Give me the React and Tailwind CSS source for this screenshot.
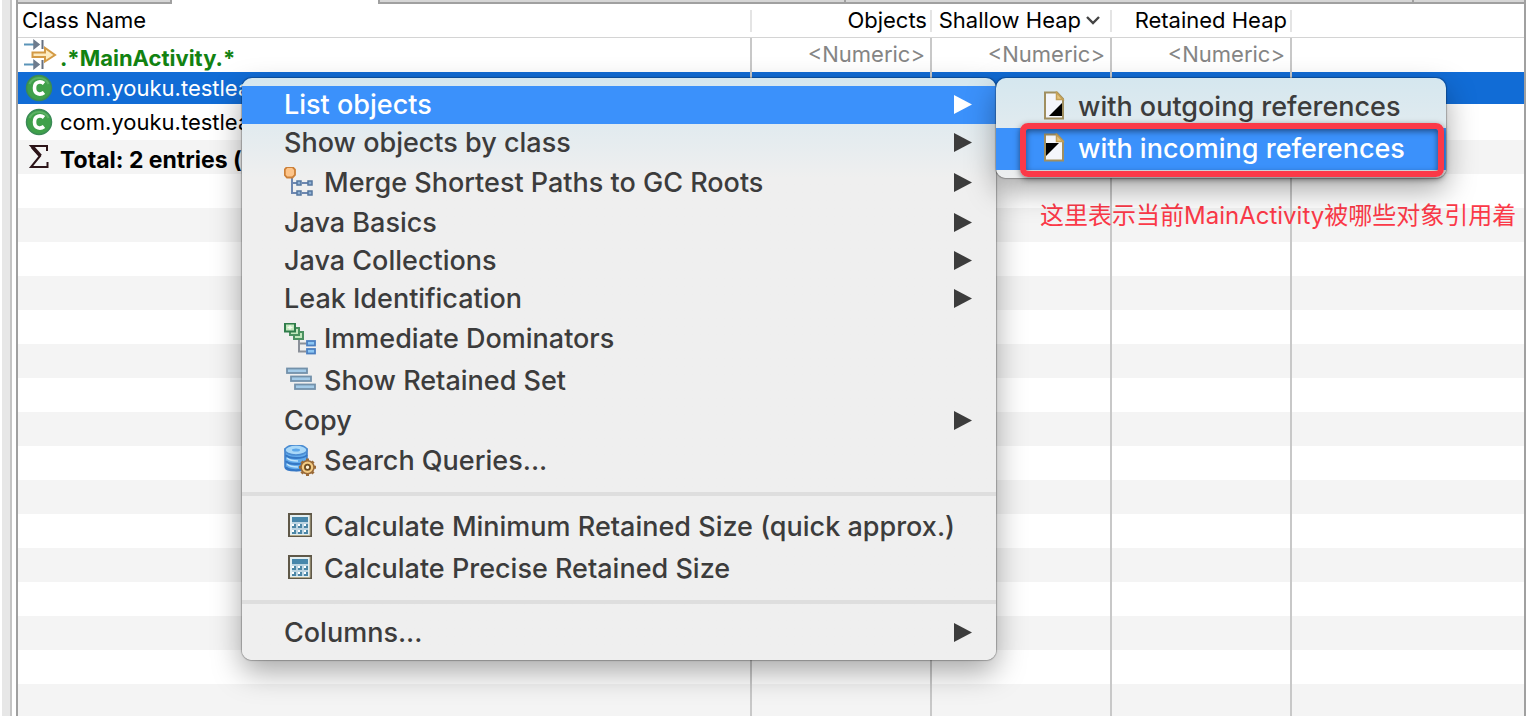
const stripes = Array.from({ length: 16 }, (_, i) => i);

function FilterIcon() {
  return (
    <svg width="34" height="34" viewBox="0 0 34 34" className="shrink-0" aria-hidden="true">
      <g fill="none" strokeWidth="2">
        <path d="M1 6.500H12" stroke="#5a94b8" />
        <path d="M1 26.500H12" stroke="#5a94b8" />
        <path d="M11 2.500L16 6.500L11 10.500Z M11 22.500L16 26.500L11 30.500Z" fill="#6f7c8d" stroke="#6f7c8d" strokeWidth="1.500" />
        <path d="M19.500 2V11 M19.500 22V31" stroke="#667080" />
      </g>
      <path d="M9.500 14.500H22V10L32 17L22 23.500V19H9.500Z" fill="#fdebc0" stroke="#d39a45" strokeWidth="2" />
    </svg>
  );
}

function ClassIcon() {
  return (
    <svg width="28" height="28" viewBox="0 0 28 28" className="shrink-0" aria-hidden="true">
      <circle cx="14" cy="14" r="12.500" fill="#3fa04a" stroke="#3b8a56" strokeWidth="1.500" />
      <path d="M4.500 10A10.500 10.500 0 0 1 23.500 10" fill="none" stroke="#5cb164" strokeWidth="2" />
      <path d="M19 9.500C16 7 9.500 7 9.500 14S16 21 19 18.500" fill="none" stroke="#fff" strokeWidth="3.600" />
    </svg>
  );
}

function SigmaIcon() {
  return (
    <svg width="28" height="28" viewBox="0 0 28 28" className="shrink-0" aria-hidden="true">
      <path d="M22 8V3H6L15 13L6 24H22.500V19" fill="none" stroke="#2c1418" strokeWidth="2" />
      <path d="M7.500 4L15.500 13" stroke="#2c1418" strokeWidth="3.500" />
    </svg>
  );
}

function MergeIcon() {
  return (
    <svg width="32" height="32" viewBox="0 0 32 32" aria-hidden="true">
      <path d="M8 10V26H14M8 16H14M18 16H24M18 26H24" fill="none" stroke="#6d87b0" strokeWidth="2" />
      <g fill="#8fb0d4" stroke="#56779f" strokeWidth="1.500">
        <rect x="13" y="14" width="4" height="4" />
        <rect x="24" y="14" width="4" height="4" />
        <rect x="13" y="24" width="4" height="4" />
        <rect x="24" y="24" width="4" height="4" />
      </g>
      <path d="M3 -1H8.500L11 1.500V7L8.500 9.500H3L0.800 7V1.500Z" transform="translate(0 1)" fill="#fdc489" stroke="#cc8038" strokeWidth="1.800" />
    </svg>
  );
}

function DominatorsIcon() {
  return (
    <svg width="32" height="32" viewBox="0 0 32 32" aria-hidden="true">
      <g fill="#c3e8bd" stroke="#4b9160" strokeWidth="2">
        <rect x="10" y="9" width="9" height="7" />
        <rect x="6" y="5" width="9" height="7" />
        <rect x="1" y="0.500" width="10" height="8" stroke="#2f7d4b" />
      </g>
      <path d="M3.500 4.500H8.500M6 2.500V6.500" stroke="#f3fcee" strokeWidth="1.500" />
      <path d="M15 17V28.500H22M15 20.500H22" fill="none" stroke="#8a9099" strokeWidth="2" />
      <g fill="#8cc6f4" stroke="#4c7fc0" strokeWidth="1.800">
        <rect x="23" y="18" width="8" height="4.500" />
        <rect x="23" y="26" width="8" height="4.500" />
      </g>
    </svg>
  );
}

function RetainedIcon() {
  return (
    <svg width="32" height="32" viewBox="0 0 32 32" aria-hidden="true">
      <g fill="#a4cbe8" stroke="#7391aa" strokeWidth="1.800">
        <rect x="3" y="3.500" width="20" height="4.500" />
        <rect x="7" y="11.500" width="20" height="4.500" />
        <rect x="11" y="19.500" width="20" height="4.500" />
      </g>
    </svg>
  );
}

function SearchIcon() {
  return (
    <svg width="32" height="32" viewBox="0 0 32 32" aria-hidden="true">
      <path d="M1 4V22C1 27 23 27 23 22V4Z" fill="#62abeb" stroke="#3a7bc8" strokeWidth="1.500" />
      <path d="M2 10C4 14 20 14 23 10M2 16C4 20 20 20 23 16M2 22C4 26 18 26 20 23" fill="none" stroke="#3577c4" strokeWidth="2" />
      <path d="M3 13C6 16 12 16 14 16M3 19C6 22 12 22 14 22" fill="none" stroke="#bfe3fb" strokeWidth="1.500" />
      <ellipse cx="12" cy="5" rx="11" ry="5" fill="#a9d8f8" stroke="#4a8cd2" strokeWidth="1.500" />
      <ellipse cx="12" cy="5" rx="4" ry="1.500" fill="#5ea8ea" />
      <path d="M23.500 13.500V31M15 22.300H32M17.500 16.500L29.500 28.500M29.500 16.500L17.500 28.500" stroke="#9a6a38" strokeWidth="3" />
      <circle cx="23.500" cy="22.300" r="6.500" fill="#f3cb83" stroke="#9a6a38" strokeWidth="1.500" />
      <circle cx="23.500" cy="22.300" r="2.600" fill="#fff3d6" stroke="#6e4c22" strokeWidth="1.800" />
    </svg>
  );
}

function CalculatorIcon() {
  return (
    <svg width="32" height="32" viewBox="0 0 32 32" aria-hidden="true">
      <rect x="5" y="3" width="22" height="22" fill="#e3eff2" stroke="#5f5848" strokeWidth="2" />
      <path d="M6 24.500H26V4" fill="none" stroke="#b3a988" strokeWidth="1" />
      <rect x="8" y="6" width="16" height="17" fill="#bcd5e2" />
      <rect x="8" y="6" width="16" height="5" fill="#4787ab" />
      <g fill="#4c87a6">
        <rect x="8" y="13" width="4" height="4" />
        <rect x="14" y="13" width="4" height="4" />
        <rect x="20" y="13" width="4" height="4" />
        <rect x="8" y="19" width="4" height="4" />
        <rect x="14" y="19" width="4" height="4" />
        <rect x="20" y="19" width="4" height="4" />
      </g>
      <g fill="#fff">
        <rect x="8" y="13" width="2" height="2" />
        <rect x="14" y="13" width="2" height="2" />
        <rect x="20" y="13" width="2" height="2" />
        <rect x="8" y="19" width="2" height="2" />
        <rect x="14" y="19" width="2" height="2" />
        <rect x="20" y="19" width="2" height="2" />
      </g>
    </svg>
  );
}

function PageIcon({ corner }) {
  return (
    <svg width="32" height="32" viewBox="0 0 32 32" aria-hidden="true">
      <path d="M7 1.500H19L25 8V27.500H7Z" fill="#f4f6fb" stroke="#a08f60" strokeWidth="2" />
      <path d="M18.500 1.500V8.500H25Z" fill="#e5c37c" stroke="#c3a057" strokeWidth="1.500" />
      <path d={corner === "out" ? "M24 12V25H11Z" : "M8 10H21L8 23Z"} fill="#000" />
    </svg>
  );
}

function Arrow() {
  return (
    <svg width="18" height="20" viewBox="0 0 18 20" className="ml-auto shrink-0" aria-hidden="true">
      <path d="M0 0L18 9.500L0 19Z" fill="currentColor" />
    </svg>
  );
}

function MenuItem({ label, icon, submenu, active }) {
  const height = icon ? "h-[42px]" : "h-[38px]";
  const tone = active ? "bg-[#3b91fb] text-white" : "text-[#3c3c3c]";
  return (
    <button
      type="button"
      role="menuitem"
      className={`flex w-full items-center gap-2 pr-6 pl-[42px] text-left whitespace-nowrap ${height} ${tone}`}
    >
      {icon}
      <span>{label}</span>
      {submenu && <Arrow />}
    </button>
  );
}

function Separator() {
  return (
    <div role="separator" className="py-[10px]">
      <div className="h-1 bg-[#dedede]" />
    </div>
  );
}

const panel =
  "rounded-[10px] bg-linear-to-b from-[#d5e7ef] to-[#efefef] py-2 shadow-[0_0_1px_1px_rgba(0,0,0,0.25),0_12px_30px_rgba(0,0,0,0.35)]";

function ContextMenu() {
  return (
    <div className="absolute top-[78px] left-[242px] flex items-start text-[27px] leading-8 font-[450]">
      <div role="menu" aria-label="Object actions" className={`w-[754px] to-[100px] ${panel}`}>
        <MenuItem label="List objects" submenu active />
        <MenuItem label="Show objects by class" submenu />
        <MenuItem label="Merge Shortest Paths to GC Roots" icon={<MergeIcon />} submenu />
        <MenuItem label="Java Basics" submenu />
        <MenuItem label="Java Collections" submenu />
        <MenuItem label="Leak Identification" submenu />
        <MenuItem label="Immediate Dominators" icon={<DominatorsIcon />} />
        <MenuItem label="Show Retained Set" icon={<RetainedIcon />} />
        <MenuItem label="Copy" submenu />
        <MenuItem label="Search Queries..." icon={<SearchIcon />} />
        <Separator />
        <MenuItem label="Calculate Minimum Retained Size (quick approx.)" icon={<CalculatorIcon />} />
        <MenuItem label="Calculate Precise Retained Size" icon={<CalculatorIcon />} />
        <Separator />
        <MenuItem label="Columns..." submenu />
      </div>
      <div>
        <div role="menu" aria-label="List objects" className={`relative w-[450px] to-[110px] ${panel}`}>
          <MenuItem label="with outgoing references" icon={<PageIcon corner="out" />} />
          <MenuItem label="with incoming references" icon={<PageIcon corner="in" />} active />
          <div className="pointer-events-none absolute top-[45px] right-[2px] left-6 h-[54px] rounded-lg border-6 border-[#fb3948] shadow-[0_2px_6px_rgba(0,0,0,0.5),inset_0_2px_6px_rgba(0,0,0,0.5)]" />
        </div>
        <p className="pt-[22px] pl-11 text-[24px] font-normal whitespace-nowrap text-[#fb3948]">
          这里表示当前MainActivity被哪些对象引用着
        </p>
      </div>
    </div>
  );
}

function NumericFilter({ label }) {
  return (
    <td className="border-r-2 border-[#c8c8c8] p-0 pr-[5px] pb-[2px]">
      <input
        aria-label={label}
        placeholder="<Numeric>"
        className="block w-full bg-transparent text-right outline-none placeholder:text-[#858585]"
      />
    </td>
  );
}

function EmptyCells() {
  return (
    <>
      <td className="border-r-2 border-[#c8c8c8]" />
      <td className="border-r-2 border-[#c8c8c8]" />
      <td className="border-r-2 border-[#c8c8c8]" />
      <td />
    </>
  );
}

function NameCell({ icon, children }) {
  return (
    <td className="overflow-hidden border-r-2 border-[#c8c8c8] p-0 whitespace-nowrap">
      <div className="flex items-center gap-[7px] pl-[7px]">
        {icon}
        {children}
      </div>
    </td>
  );
}

function HeaderCell({ children }) {
  return (
    <th className="p-0 font-normal">
      <div className="flex h-[22px] items-center justify-end gap-1 border-r-2 border-[#e4e4e4] pr-[3px] pb-[2px] whitespace-nowrap">
        {children}
      </div>
    </th>
  );
}

export default function App() {
  return (
    <div
      className="relative flex h-screen overflow-hidden bg-white text-[22px] leading-7 text-black"
      style={{ fontFamily: 'Inter, "Noto Sans CJK SC", sans-serif' }}
    >
      <div className="mr-1 ml-[2px] w-[10px] shrink-0 border-r-2 border-[#c4c4c4] bg-[#e7e7e7]" />
      <main className="mr-1 flex min-w-0 grow flex-col border-x-2 border-[#a0a0a0]">
        <div className="flex h-1 shrink-0 border-b-2 border-[#a0a0a0] bg-[#d6d6d6]">
          <div className="w-[154px] border-r-2 border-[#a0a0a0]" />
          <div className="-mb-[2px] w-[206px] bg-white" />
          <div className="w-[468px] border-x-2 border-[#a0a0a0]" />
          <div className="w-[568px] border-r-2 border-[#a0a0a0]" />
        </div>
        <table className="w-full table-fixed border-separate border-spacing-0">
          <colgroup>
            <col className="w-[734px]" />
            <col className="w-[180px]" />
            <col className="w-[180px]" />
            <col className="w-[180px]" />
            <col />
          </colgroup>
          <thead>
            <tr className="h-[33px]">
              <th className="p-0 text-left font-normal">
                <div className="flex h-[22px] items-center border-r-2 border-[#e4e4e4] pb-[2px] pl-1">Class Name</div>
              </th>
              <HeaderCell>Objects</HeaderCell>
              <HeaderCell>
                Shallow Heap
                <svg width="16" height="10" viewBox="0 0 16 10" className="mr-[6px] shrink-0" aria-hidden="true">
                  <path d="M2 2L8 8L14 2" fill="none" stroke="#444" strokeWidth="2.400" />
                </svg>
              </HeaderCell>
              <HeaderCell>Retained Heap</HeaderCell>
              <th />
            </tr>
            <tr>
              <td colSpan={5} className="h-px bg-[#d4d4d4] p-0" />
            </tr>
          </thead>
          <tbody>
            <tr className="h-[34px]">
              <td className="border-r-2 border-[#c8c8c8] p-0">
                <div className="flex items-center gap-[3px] pl-[5px]">
                  <FilterIcon />
                  <input
                    aria-label="Class name filter"
                    defaultValue=".*MainActivity.*"
                    className="min-w-0 grow bg-transparent pt-[6px] font-bold text-[#128212] outline-none"
                  />
                </div>
              </td>
              <NumericFilter label="Objects filter" />
              <NumericFilter label="Shallow heap filter" />
              <NumericFilter label="Retained heap filter" />
              <td />
            </tr>
            <tr className="h-8 bg-[#116cd6] text-white">
              <NameCell icon={<ClassIcon />}>com.youku.testlea</NameCell>
              <EmptyCells />
            </tr>
            <tr className="h-9">
              <NameCell icon={<ClassIcon />}>com.youku.testlea</NameCell>
              <EmptyCells />
            </tr>
            <tr className="h-[34px] bg-[#f4f4f4] font-bold">
              <NameCell icon={<SigmaIcon />}>
                <span className="pt-[5px] text-[23px]">Total: 2 entries (</span>
              </NameCell>
              <EmptyCells />
            </tr>
            {stripes.map((i) => (
              <tr key={i} className="h-[34px] odd:bg-white even:bg-[#f4f4f4]">
                <td className="border-r-2 border-[#c8c8c8]" />
                <EmptyCells />
              </tr>
            ))}
          </tbody>
        </table>
      </main>
      <ContextMenu />
    </div>
  );
}
